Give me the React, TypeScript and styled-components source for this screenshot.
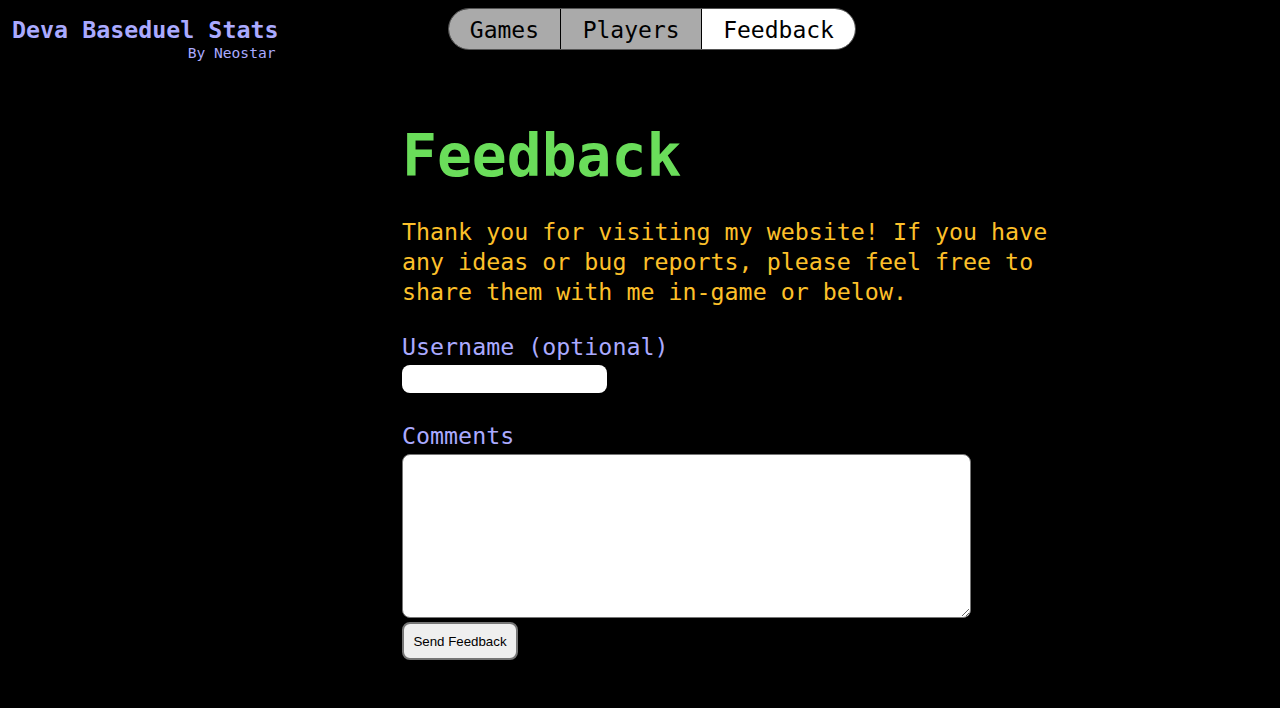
import React, { useState } from "react";
import styled, { createGlobalStyle } from "styled-components";

const GlobalStyle = createGlobalStyle`
  html, body {
    margin: 0;
    background: #000;
  }
  body {
    font-family: "DejaVu Sans Mono", "Liberation Mono", monospace;
  }
`;

const Header = styled.header`
  display: flex;
  align-items: flex-start;
  padding: 8px 0 0 12px;
`;

const Brand = styled.div`
  display: flex;
  flex-direction: column;
  align-items: flex-end;
  margin-top: 8px;
  color: #aaaaff;
`;

const BrandTitle = styled.div`
  font-size: 23.3px;
  line-height: 28px;
  font-weight: bold;
`;

const BrandSub = styled.div`
  font-size: 14.6px;
  line-height: 18px;
  margin-right: 3px;
`;

const Nav = styled.nav`
  display: flex;
  margin-left: 169px;
  border: 1px solid #555;
  border-radius: 21px;
  overflow: hidden;
  background: #000;
  gap: 1px;
`;

const Tab = styled.button<{ $active?: boolean }>`
  height: 40px;
  padding: 2px 21.3px 0;
  border: none;
  margin: 0;
  font-family: "DejaVu Sans Mono", "Liberation Mono", monospace;
  font-size: 23px;
  color: #000;
  background: ${({ $active }) => ($active ? "#fff" : "#aaa")};
  cursor: pointer;
`;

const Main = styled.main`
  width: 680px;
  margin-left: calc(50% - 238px);
  padding-top: 60px;
`;

const Title = styled.h1`
  margin: 0;
  font-size: 58px;
  line-height: 68px;
  font-weight: bold;
  color: #6add5a;
`;

const Intro = styled.p`
  margin: 27px 0 0;
  font-size: 23.3px;
  line-height: 30px;
  color: #fdc02a;
`;

const Label = styled.label<{ $gap: number }>`
  display: block;
  margin-top: ${({ $gap }) => $gap}px;
  font-size: 23.3px;
  line-height: 30px;
  color: #aaaaff;
`;

const TextInput = styled.input`
  display: block;
  box-sizing: border-box;
  width: 205px;
  height: 28px;
  margin-top: 3px;
  border: none;
  border-radius: 8px;
  background: #fff;
  padding: 0 8px;
`;

const Comments = styled.textarea`
  display: block;
  box-sizing: border-box;
  width: 569px;
  height: 164px;
  margin-top: 3px;
  border: 1px solid #767676;
  border-radius: 8px;
  background: #fff;
`;

const Send = styled.button`
  display: block;
  box-sizing: border-box;
  width: 116px;
  height: 38px;
  margin-top: 4px;
  border: 2px solid #767676;
  border-radius: 8px;
  background: #efefef;
  font-family: "Liberation Sans", Arial, sans-serif;
  font-size: 13.3px;
  color: #000;
  cursor: pointer;
`;

const tabs = ["Games", "Players", "Feedback"];

export default function App() {
  const [name, setName] = useState("");
  const [text, setText] = useState("");

  return (
    <>
      <GlobalStyle />
      <Header>
        <Brand>
          <BrandTitle>Deva Baseduel Stats</BrandTitle>
          <BrandSub>By Neostar</BrandSub>
        </Brand>
        <Nav>
          {tabs.map((t) => (
            <Tab key={t} $active={t === "Feedback"}>
              {t}
            </Tab>
          ))}
        </Nav>
      </Header>
      <Main>
        <Title>Feedback</Title>
        <Intro>
          Thank you for visiting my website! If you have any ideas or bug
          reports, please feel free to share them with me in-game or below.
        </Intro>
        <Label $gap={25} htmlFor="username">
          Username (optional)
        </Label>
        <TextInput
          id="username"
          type="text"
          value={name}
          onChange={(e) => setName(e.target.value)}
        />
        <Label $gap={28} htmlFor="comments">
          Comments
        </Label>
        <Comments
          id="comments"
          value={text}
          onChange={(e) => setText(e.target.value)}
        />
        <Send>Send Feedback</Send>
      </Main>
    </>
  );
}
